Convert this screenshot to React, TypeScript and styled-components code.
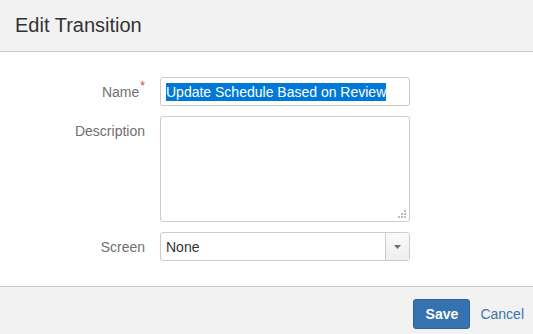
import React from "react";
import styled, { createGlobalStyle } from "styled-components";

const Global = createGlobalStyle`
  html, body { margin: 0; padding: 0; background: #fff; }
  body { font-family: "Liberation Sans", Arial, sans-serif; font-size: 14px; color: #333; }
`;

const Dialog = styled.div`
  width: 533px;
  height: 334px;
  display: flex;
  flex-direction: column;
  background: #fff;
`;

const Header = styled.header`
  height: 52px;
  box-sizing: border-box;
  background: #f2f2f2;
  border-bottom: 1px solid #cccccc;
  display: flex;
  align-items: center;
  padding: 0 15px 1px;
`;

const Title = styled.h2`
  margin: 0;
  font-size: 20px;
  font-weight: normal;
  color: #333;
  line-height: 24px;
`;

const Body = styled.div`
  flex: 1;
  padding: 25px 0 0;
  display: flex;
  flex-direction: column;
  gap: 10px;
`;

const Row = styled.div`
  display: grid;
  grid-template-columns: 145px 250px;
  column-gap: 15px;
  align-items: start;
`;

const Label = styled.label<{ $top: number }>`
  text-align: right;
  color: #707070;
  font-size: 14px;
  line-height: 17px;
  padding-top: ${(p) => p.$top}px;
`;

const Req = styled.sup`
  color: #d04437;
  font-size: 12px;
  line-height: 0;
  position: relative;
  top: -1px;
  margin-left: 1px;
`;

const TextInput = styled.div`
  height: 29px;
  box-sizing: border-box;
  border: 1px solid #cccccc;
  border-radius: 3px;
  background: #fff;
  padding: 0 5px;
  display: flex;
  align-items: center;
  font-size: 14px;
  color: #333;
  white-space: nowrap;
  overflow: hidden;
`;

const Selected = styled.span`
  background: #0078d7;
  color: #fff;
  line-height: 18px;
`;

const TextArea = styled.div`
  height: 106px;
  box-sizing: border-box;
  border: 1px solid #cccccc;
  border-radius: 3px;
  background: #fff;
  position: relative;
`;

const Grip = styled.svg`
  position: absolute;
  right: 3px;
  bottom: 3px;
`;

const Select = styled.div`
  height: 29px;
  box-sizing: border-box;
  border: 1px solid #cccccc;
  border-radius: 3px;
  background: #fff;
  display: flex;
  overflow: hidden;
`;

const SelectValue = styled.div`
  flex: 1;
  display: flex;
  align-items: center;
  padding: 0 5px;
  font-size: 14px;
  color: #333;
`;

const SelectButton = styled.div`
  width: 23px;
  border-left: 1px solid #cccccc;
  background: linear-gradient(#fafafa, #eeeeee);
  display: flex;
  align-items: center;
  justify-content: center;
`;

const Footer = styled.footer`
  height: 48px;
  box-sizing: border-box;
  background: #f2f2f2;
  border-top: 1px solid #cccccc;
  display: flex;
  justify-content: flex-end;
  align-items: flex-start;
  padding: 12px 9px 0 0;
  gap: 10px;
`;

const SaveButton = styled.button`
  width: 57px;
  height: 30px;
  border: 1px solid #2e619b;
  border-radius: 3px;
  background: #3572b0;
  color: #fff;
  font-family: "Liberation Sans", Arial, sans-serif;
  font-size: 14px;
  font-weight: bold;
  padding: 0;
`;

const CancelLink = styled.a`
  color: #3b73af;
  font-size: 14px;
  line-height: 30px;
  text-decoration: none;
`;

export default function App() {
  return (
    <>
      <Global />
      <Dialog>
        <Header>
          <Title>Edit Transition</Title>
        </Header>
        <Body>
          <Row>
            <Label $top={7}>
              Name<Req>*</Req>
            </Label>
            <TextInput>
              <Selected>Update Schedule Based on Review</Selected>
            </TextInput>
          </Row>
          <Row>
            <Label $top={7}>Description</Label>
            <TextArea>
              <Grip width="8" height="8" viewBox="0 0 8 8">
                <rect x="6" y="0" width="2" height="2" fill="#bbb" />
                <rect x="3" y="3" width="2" height="2" fill="#bbb" />
                <rect x="6" y="3" width="2" height="2" fill="#bbb" />
                <rect x="0" y="6" width="2" height="2" fill="#bbb" />
                <rect x="3" y="6" width="2" height="2" fill="#bbb" />
                <rect x="6" y="6" width="2" height="2" fill="#bbb" />
              </Grip>
            </TextArea>
          </Row>
          <Row>
            <Label $top={7}>Screen</Label>
            <Select>
              <SelectValue>None</SelectValue>
              <SelectButton>
                <svg width="7" height="4" viewBox="0 0 7 4">
                  <path d="M0 0 H7 L3.5 4 Z" fill="#707070" />
                </svg>
              </SelectButton>
            </Select>
          </Row>
        </Body>
        <Footer>
          <SaveButton>Save</SaveButton>
          <CancelLink href="#">Cancel</CancelLink>
        </Footer>
      </Dialog>
    </>
  );
}
